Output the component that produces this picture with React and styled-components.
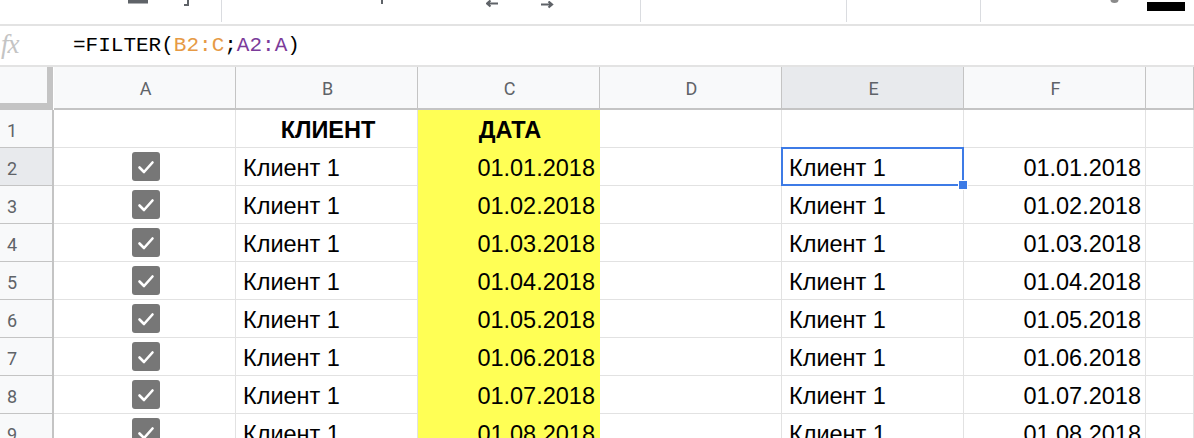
import React from 'react';
import styled, { createGlobalStyle } from 'styled-components';

const GlobalStyle = createGlobalStyle`
  html, body {
    margin: 0;
    padding: 0;
    background: #fff;
    overflow: hidden;
  }
  body {
    font-family: "Liberation Sans", Arial, sans-serif;
  }
`;

const Page = styled.div`
  width: 1194px;
  height: 438px;
  overflow: hidden;
  display: flex;
  flex-direction: column;
`;

const Toolbar = styled.div`
  height: 24px;
  flex: none;
  display: flex;
  align-items: flex-start;
  border-bottom: 2px solid #e3e3e3;
`;

const Frag = styled.div`
  flex: none;
  margin-left: ${({ $left }) => $left}px;
  margin-top: ${({ $top }) => $top || 0}px;
  display: flex;
`;

const Sep = styled.div`
  flex: none;
  width: 1px;
  height: 22px;
  margin-left: ${({ $left }) => $left}px;
  background: #dadce0;
`;

const BlackBar = styled.div`
  flex: none;
  width: 38px;
  height: 9px;
  margin-left: ${({ $left }) => $left}px;
  margin-top: 2px;
  background: #000;
`;

const FormulaBar = styled.div`
  height: 39px;
  flex: none;
  display: flex;
  align-items: center;
  border-bottom: 2px solid #e3e3e3;
`;

const Fx = styled.span`
  width: 72px;
  padding-left: 1px;
  font-family: "Liberation Serif", "Times New Roman", serif;
  font-style: italic;
  font-size: 27px;
  color: #c4c4c4;
  letter-spacing: -1px;
  margin-top: -3px;
`;

const Formula = styled.span`
  font-family: "Liberation Mono", "Courier New", monospace;
  font-size: 21px;
  color: #000;
`;

const Ref = styled.span`
  color: ${({ $color }) => $color};
`;

const Grid = styled.div`
  display: grid;
  grid-template-columns: 54px repeat(6, 182px) 1fr;
  grid-auto-rows: 38px;
  grid-template-rows: 43px;
`;

const Corner = styled.div`
  background: #f8f9fa;
  border-right: 6px solid #c4c4c4;
  border-bottom: 7px solid #c4c4c4;
  box-sizing: border-box;
  width: 53px;
`;

const ColHead = styled.div`
  box-sizing: border-box;
  background: ${({ $active }) => ($active ? '#e8eaed' : '#f8f9fa')};
  border-right: 1px solid #c4c4c4;
  border-bottom: 2px solid #c4c4c4;
  display: flex;
  align-items: center;
  justify-content: center;
  font-family: "Roboto", "Liberation Sans", sans-serif;
  font-size: 18px;
  color: #5f6368;
  padding: 2px 0 0 2px;
`;

const RowHead = styled.div`
  box-sizing: border-box;
  background: ${({ $active }) => ($active ? '#e8eaed' : '#f8f9fa')};
  border-right: 2px solid #c4c4c4;
  border-bottom: 1px solid #c4c4c4;
  display: flex;
  align-items: center;
  padding: 3px 0 0 7px;
  font-family: "Roboto", "Liberation Sans", sans-serif;
  font-size: 18px;
  color: #5f6368;
`;

const Cell = styled.div`
  position: relative;
  box-sizing: border-box;
  background: ${({ $fill }) => $fill || '#fff'};
  border-right: 1px solid ${({ $fill }) => $fill || '#e2e2e2'};
  border-bottom: 1px solid ${({ $fill }) => $fill || '#e2e2e2'};
  display: flex;
  align-items: center;
  justify-content: ${({ $align }) =>
    $align === 'right' ? 'flex-end' : $align === 'center' ? 'center' : 'flex-start'};
  padding: ${({ $plain }) => ($plain ? '0' : '4px')} 4px 0 7px;
  font-size: 23.5px;
  font-weight: ${({ $bold }) => ($bold ? 700 : 400)};
  color: #000;
  white-space: nowrap;
`;

const Selection = styled.div`
  position: absolute;
  z-index: 2;
  left: -1px;
  top: -1px;
  right: -1px;
  bottom: -1px;
  border: 2px solid #3d7be6;
  pointer-events: none;
`;

const Handle = styled.div`
  position: absolute;
  right: -6px;
  bottom: -6px;
  width: 8px;
  height: 8px;
  background: #3d7be6;
  border: 1px solid #fff;
`;

const Box = styled.div`
  width: 28px;
  height: 29px;
  border-radius: 3px;
  background: #777;
  display: flex;
  align-items: center;
  justify-content: center;
`;

const Checkbox = () => (
  <Box>
    <svg width="20" height="20" viewBox="0 0 20 20">
      <path d="M3.5 10.5 L8 15 L16.5 5.5" fill="none" stroke="#fff" strokeWidth="2.6" strokeLinecap="round" strokeLinejoin="round" />
    </svg>
  </Box>
);

const columns = ['A', 'B', 'C', 'D', 'E', 'F', ''];
const YELLOW = '#ffff55';

const dateFor = (i) => `01.${String(i).padStart(2, '0')}.2018`;

export default function App() {
  return (
    <Page>
      <GlobalStyle />
      <Toolbar>
        <Frag $left={128}>
          <svg width="20" height="5"><rect x="0" y="0" width="20" height="3.5" fill="#5f6368" /></svg>
        </Frag>
        <Frag $left={35}>
          <svg width="8" height="7"><path d="M5 0 V5 H1" fill="none" stroke="#5f6368" strokeWidth="2" /></svg>
        </Frag>
        <Sep $left={30} />
        <Frag $left={157}>
          <svg width="6" height="6"><rect x="2" y="0" width="2" height="4" fill="#5f6368" /></svg>
        </Frag>
        <Frag $left={101}>
          <svg width="14" height="9"><path d="M1 3.5 H12 M4.5 0.5 L1 3.5 L4.5 6.5" fill="none" stroke="#5f6368" strokeWidth="2.2" /></svg>
        </Frag>
        <Frag $left={40} $top={1}>
          <svg width="14" height="9"><path d="M1 3.5 H12 M8.5 0.5 L12 3.5 L8.5 6.5" fill="none" stroke="#5f6368" strokeWidth="2.2" /></svg>
        </Frag>
        <Sep $left={86} />
        <Sep $left={205} />
        <Sep $left={133} />
        <Frag $left={129}>
          <svg width="9" height="4"><path d="M0.5 0 A4 3 0 0 0 8.5 0 Z" fill="#8a8a8a" /></svg>
        </Frag>
        <BlackBar $left={28} />
      </Toolbar>
      <FormulaBar>
        <Fx>fx</Fx>
        <Formula>
          =FILTER(<Ref $color="#e69a45">B2:C</Ref>;<Ref $color="#7b3b9a">A2:A</Ref>)
        </Formula>
      </FormulaBar>
      <Grid>
        <Corner />
        {columns.map((c) => (
          <ColHead key={c || 'g'} $active={c === 'E'}>{c}</ColHead>
        ))}
        {Array.from({ length: 9 }, (_, i) => {
          const n = i + 1;
          const isHead = n === 1;
          return (
            <React.Fragment key={n}>
              <RowHead $active={n === 2}>{n}</RowHead>
              <Cell $align="center" $plain>{!isHead && <Checkbox />}</Cell>
              <Cell $align={isHead ? 'center' : 'left'} $bold={isHead}>
                {isHead ? 'КЛИЕНТ' : 'Клиент 1'}
              </Cell>
              <Cell $align={isHead ? 'center' : 'right'} $bold={isHead} $fill={YELLOW}>
                {isHead ? 'ДАТА' : dateFor(i)}
              </Cell>
              <Cell />
              <Cell>
                {!isHead && 'Клиент 1'}
                {n === 2 && (
                  <Selection>
                    <Handle />
                  </Selection>
                )}
              </Cell>
              <Cell $align="right">{!isHead && dateFor(i)}</Cell>
              <Cell />
            </React.Fragment>
          );
        })}
      </Grid>
    </Page>
  );
}
